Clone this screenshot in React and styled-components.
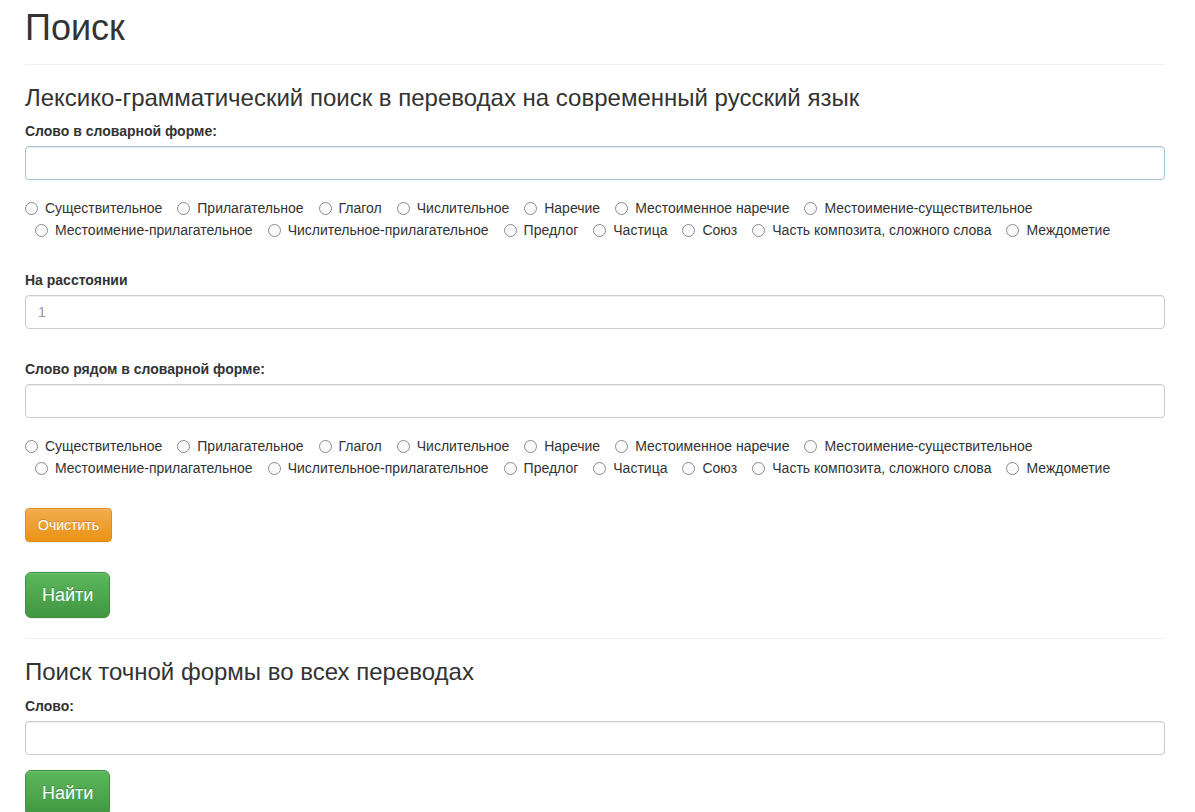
import React from 'react'
import styled, { createGlobalStyle, css } from 'styled-components'

const GlobalStyle = createGlobalStyle`
    * { box-sizing: border-box; }
    body {
        margin: 0;
        background: #fff;
        color: #333;
        font-family: "Liberation Sans", Arial, sans-serif;
        font-size: 14px;
        line-height: 20px;
    }
`

const Container = styled.div`
    max-width: 1140px;
    margin: 0 25px;
`

const PageHeader = styled.div`
    padding-bottom: 16px;
    border-bottom: 1px solid #eee;
`

const Title = styled.h1`
    margin: 8px 0 0;
    font-size: 36px;
    font-weight: 500;
    line-height: 40px;
`

const SectionTitle = styled.h3`
    margin: 20px 0 10px;
    font-size: 24px;
    font-weight: 500;
    line-height: 26.4px;
`

const Divider = styled.hr`
    margin: 20px 0 0;
    border: 0;
    border-top: 1px solid #eee;
`

const Label = styled.label`
    display: block;
    margin-bottom: 5px;
    font-weight: 700;
    ${p => p.$spaced && css`margin-top: 30px;`}
`

const Input = styled.input`
    display: block;
    width: 100%;
    height: 34px;
    padding: 6px 12px;
    font-family: inherit;
    font-size: 14px;
    color: #555;
    background: #fff;
    border: 1px solid ${p => (p.$active ? '#a4c3d6' : '#ccc')};
    border-radius: 4px;
    box-shadow: inset 0 1px 1px rgba(0, 0, 0, .075);
    outline: none;
    &::placeholder { color: #999; }
`

const RadioGroup = styled.div`
    display: flex;
    flex-wrap: wrap;
    row-gap: 2px;
    margin-top: 18px;
`

const RadioLabel = styled.label`
    position: relative;
    display: inline-block;
    padding-left: 20px;
    margin-right: 5px;
    & + & { margin-left: 10px; }
`

const Radio = styled.input.attrs({ type: 'radio' })`
    appearance: none;
    position: absolute;
    left: 0;
    top: 3.5px;
    width: 13px;
    height: 13px;
    margin: 0;
    border: 1.5px solid #8a8a94;
    border-radius: 50%;
    background: #fbfbfb;
`

const Button = styled.button`
    display: block;
    font-family: inherit;
    color: #fff;
    border: 1px solid;
    cursor: pointer;
    text-shadow: 0 -1px 0 rgba(0, 0, 0, .2);
    box-shadow: inset 0 1px 0 rgba(255, 255, 255, .15), 0 1px 1px rgba(0, 0, 0, .075);
    ${p => p.$variant === 'warning' ? css`
        margin-top: 30px;
        padding: 6px 12px;
        font-size: 14px;
        line-height: 20px;
        border-radius: 4px;
        border-color: #e38d13;
        background: linear-gradient(to bottom, #f0ad4e 0, #eb9316 100%);
    ` : css`
        margin-top: ${p.$gap || 30}px;
        padding: 10px 16px;
        font-size: 18px;
        line-height: 24px;
        border-radius: 6px;
        border-color: #3e8f3e;
        background: linear-gradient(to bottom, #5cb85c 0, #419641 100%);
    `}
`

const PARTS = [
    'Существительное',
    'Прилагательное',
    'Глагол',
    'Числительное',
    'Наречие',
    'Местоименное наречие',
    'Местоимение-существительное',
    'Местоимение-прилагательное',
    'Числительное-прилагательное',
    'Предлог',
    'Частица',
    'Союз',
    'Часть композита, сложного слова',
    'Междометие'
]

function PartsOfSpeech({ name }) {
    return (
        <RadioGroup>
            {PARTS.map(part => (
                <RadioLabel key={part}>
                    <Radio name={name} value={part} />{part}
                </RadioLabel>
            ))}
        </RadioGroup>
    )
}

function App() {
    return (
        <Container>
            <GlobalStyle />
            <PageHeader>
                <Title>Поиск</Title>
            </PageHeader>

            <SectionTitle>Лексико-грамматический поиск в переводах на современный русский язык</SectionTitle>
            <Label>Слово в словарной форме:</Label>
            <Input $active />
            <PartsOfSpeech name="pos1" />

            <Label $spaced>На расстоянии</Label>
            <Input placeholder="1" />

            <Label $spaced>Слово рядом в словарной форме:</Label>
            <Input />
            <PartsOfSpeech name="pos2" />

            <Button $variant="warning">Очистить</Button>
            <Button>Найти</Button>

            <Divider />

            <SectionTitle>Поиск точной формы во всех переводах</SectionTitle>
            <Label>Слово:</Label>
            <Input />
            <Button $gap={15}>Найти</Button>
        </Container>
    )
}

export default App
